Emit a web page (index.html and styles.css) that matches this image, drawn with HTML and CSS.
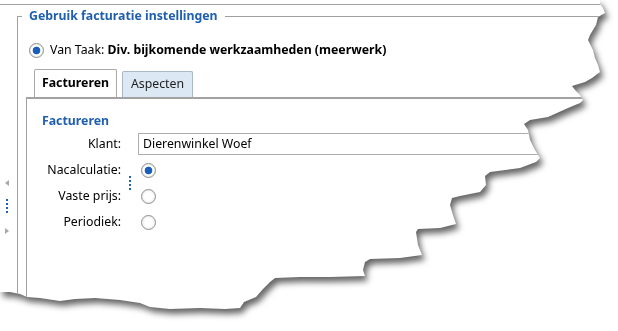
FILE: index.html
```html
<!DOCTYPE html>
<html lang="nl">
<head>
  <meta charset="UTF-8">
  <title>Gebruik facturatie instellingen</title>
  <link rel="stylesheet" href="styles.css">
</head>
<body>

  <div class="sheet">
    <div class="paper">
      <div class="window">

        <aside class="gutter">
          <span class="arrow arrow-left"></span>
          <span class="grip"></span>
          <span class="arrow arrow-right"></span>
        </aside>

        <fieldset class="group">
          <legend>Gebruik facturatie instellingen</legend>

          <div class="source">
            <span class="radio checked"></span>
            <span>Van Taak: <b>Div. bijkomende werkzaamheden (meerwerk)</b></span>
          </div>

          <div class="tabs">
            <div class="tab active">Factureren</div>
            <div class="tab">Aspecten</div>
          </div>

          <div class="panel">
            <h3 class="caption">Factureren</h3>
            <div class="form">
              <span class="label">Klant:</span>
              <div class="input">Dierenwinkel Woef</div>

              <span class="label">Nacalculatie:</span>
              <span class="grip form-grip"></span>
              <span class="radio checked"></span>

              <span class="label">Vaste prijs:</span>
              <span class="radio"></span>

              <span class="label">Periodiek:</span>
              <span class="radio"></span>
            </div>
          </div>
        </fieldset>

      </div>
    </div>
  </div>

</body>
</html>
```

FILE: styles.css
```css
body {
  margin: 0;
  width: 618px;
  height: 331px;
  overflow: hidden;
  background: #fff;
  font-family: 'Noto Sans', sans-serif;
  font-size: 12.3px;
  line-height: 16px;
  color: #000;
}

/* torn paper edge + its shadow */
.sheet {
  height: 331px;
  filter: drop-shadow(3px 5px 3px rgba(0, 0, 0, 0.6));
}

.paper {
  height: 331px;
  padding-top: 4px;
  box-sizing: border-box;
  background: #fff;
  clip-path: polygon(0 0, 600px 0, 600px 4px, 603px 8px, 605px 13px, 598px 17px, 596px 25px, 590px 35px, 588px 40px, 593px 50px, 595px 58px, 598px 65px, 600px 72px, 592px 78px, 585px 82px, 572px 86px, 575px 90px, 580px 95px, 583px 100px, 580px 103px, 568px 108px, 548px 117px, 530px 120px, 524px 124px, 528px 130px, 530px 140px, 535px 150px, 540px 158px, 536px 162px, 520px 168px, 490px 172px, 485px 176px, 486px 185px, 480px 192px, 460px 196px, 452px 198px, 450px 205px, 453px 215px, 456px 224px, 440px 228px, 418px 229px, 416px 232px, 418px 245px, 422px 255px, 400px 258px, 370px 259px, 365px 262px, 363px 270px, 365px 276px, 330px 277px, 300px 277px, 275px 278px, 270px 282px, 263px 289px, 256px 297px, 244px 302px, 240px 308px, 225px 309px, 200px 308px, 170px 309px, 150px 307px, 140px 303px, 120px 300px, 95px 298px, 75px 299px, 60px 301px, 40px 298px, 27px 297px, 20px 294px, 10px 292px, 0 292px);
}

.window {
  display: flex;
  height: 100%;
  border-top: 1px solid #a0a0a0;
}

.gutter {
  width: 17px;
  flex: none;
  display: flex;
  flex-direction: column;
  align-items: flex-start;
  padding: 175px 0 0 5px;
  box-sizing: border-box;
}

.arrow {
  width: 0;
  height: 0;
  border-top: 3px solid transparent;
  border-bottom: 3px solid transparent;
}

.arrow-left {
  border-right: 4px solid #a8a8a8;
}

.arrow-right {
  border-left: 4px solid #a8a8a8;
}

.grip {
  width: 2px;
  height: 14px;
  margin: 13px 0 15px 1px;
  background: repeating-linear-gradient(to bottom, #1f62b8 0 2px, transparent 2px 4px);
}

/* group box */
.group {
  flex: 1;
  display: flex;
  flex-direction: column;
  margin: 3px 0 0 0;
  padding: 0 0 0 8px;
  border: none;
  border-top: 1px solid #a0a0a0;
  border-left: 1px solid #a0a0a0;
  min-width: 0;
}

.group legend {
  margin-left: -4px;
  padding: 0 7px;
  font-weight: bold;
  color: #1f5fae;
}

.source {
  display: flex;
  align-items: center;
  gap: 6px;
  margin: 18px 0 0 3px;
}

.radio {
  width: 15px;
  height: 15px;
  flex: none;
  box-sizing: border-box;
  border: 1px solid #8e8f8f;
  border-radius: 50%;
  background: radial-gradient(circle, #fff 0 4px, #f0f0f0 6px);
}

.radio.checked {
  background: radial-gradient(circle, #1b5fbd 0 3.5px, #fff 4.2px 5px, #eee 6px);
}

/* tabs */
.tabs {
  display: flex;
  align-items: flex-end;
  gap: 5px;
  margin: 11px 0 0 8px;
}

.tab {
  height: 26px;
  box-sizing: border-box;
  padding: 4px 0 0;
  text-align: center;
  border: 1px solid #a9b7c6;
  border-bottom: none;
  border-radius: 2px 2px 0 0;
  background: #dde8f5;
  width: 71px;
  color: #1e1e1e;
}

.tab.active {
  height: 28px;
  width: 83px;
  padding-top: 5px;
  background: #fff;
  border-color: #a8a8a8;
  font-weight: bold;
  color: #000;
}

.panel {
  flex: 1;
  border-top: 2px solid #a2a2a2;
  border-left: 1px solid #a0a0a0;
  padding: 14px 0 0 15px;
}

.caption {
  margin: 0;
  font-size: 12.3px;
  font-weight: bold;
  color: #1f5fae;
}

.form {
  display: grid;
  grid-template-columns: 79px 17px 1fr;
  grid-auto-rows: 26px;
  align-items: center;
  margin-top: 2px;
}

.label {
  grid-column: 1;
  text-align: right;
}

.input {
  grid-column: 3;
  height: 22px;
  box-sizing: border-box;
  border: 1px solid #abadb3;
  padding: 2px 0 0 4px;
}

.form .radio {
  grid-column: 3;
  margin-left: 3px;
}

.form-grip {
  grid-column: 2;
  grid-row: 2 / 4;
  margin: 0 0 0 8px;
}
```
